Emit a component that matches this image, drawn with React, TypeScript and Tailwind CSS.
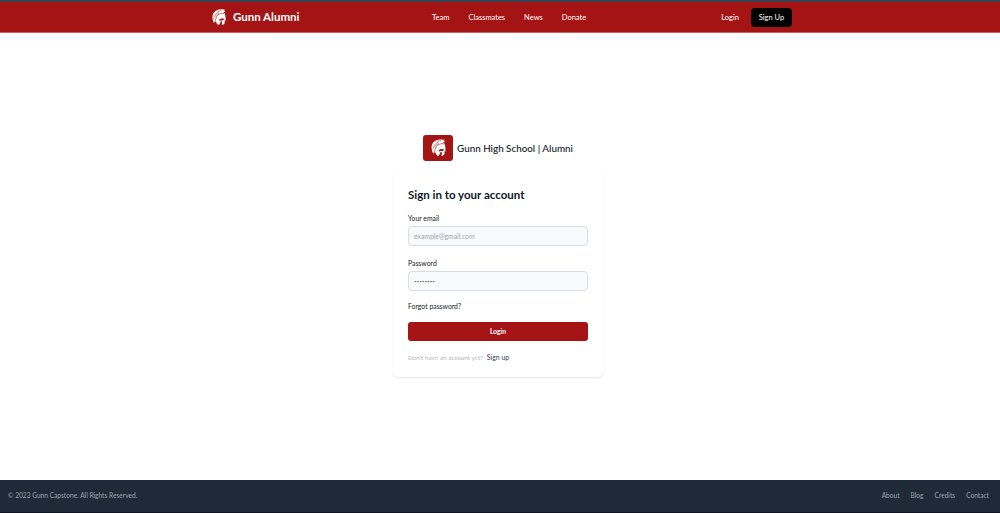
const FONT = "font-['Lato','Noto_Sans',sans-serif]";

function HelmetLogo({ className }: { className: string }) {
  return (
    <svg viewBox="0 0 28 34" className={className} fill="#fff">
      {/* silhouette */}
      <path d="M4 28C-1 18 0 8 8 3.500 14 .2 22 0 27 2c-2 .6-3 1.200-4 2.200 1.500.1 3 .7 4 1.800-2 0-3.500.3-4.800 1 1.200.3 2.200.8 2.800 1.500 1 1.500 1.700 4 2 7 .2 3 .2 6 0 8.500l-1.500-1-.5 6.500c-1.600 1.500-3.400 2.300-5.400 2.500l1-6.500-2.500-1.500-1.500 3.500-2.500 4.500C12 32 10 30 9 28l-1-3z" />
      {/* crest stripes */}
      <path d="M3.500 20C4 13 8 8 14 5.500M6.500 15c1.500-3 4-5 8-6.500M11 5c2-1.200 5-2 8-2" stroke="#a51414" strokeWidth="0.9" fill="none" />
      {/* crest edge */}
      <path d="M5 28c1-3 2.500-6 3.200-10 .8-4 4-7.500 9-8.700 2.500-.6 5-.6 7.300 0" stroke="#a51414" strokeWidth="1.200" fill="none" />
      {/* eye and cheek */}
      <path d="M14 21.500c2.500-2 6-3 9.500-2.300.3 1 .3 2.200-.2 3.300l-6.500.3-1 1.500z" fill="#a51414" />
    </svg>
  );
}

function NavLink({ label }: { label: string }) {
  return <a className="pt-[2px] text-[7.5px] leading-[12px] text-white">{label}</a>;
}

function Field({ label, placeholder, type }: { label: string; placeholder: string; type: string }) {
  return (
    <div>
      <label className="block text-[6.85px] leading-[10px] text-[#111827]">{label}</label>
      {type === "password" ? (
        <input
          type="password"
          readOnly
          value="••••••••"
          className="mt-[3px] block h-[20px] w-full rounded-[4px] border border-[#d9dde3] bg-[#f9fafb] px-[5px] text-[4.5px] text-[#6b7280] outline-none"
        />
      ) : (
        <input
          type={type}
          readOnly
          placeholder={placeholder}
          className="mt-[3px] block h-[20px] w-full rounded-[4px] border border-[#d9dde3] bg-[#f9fafb] px-[5px] text-[6.8px] text-[#6b7280] outline-none placeholder:text-[#9ca3af]"
        />
      )}
    </div>
  );
}

export default function App() {
  return (
    <div className={`flex h-[513px] flex-col overflow-hidden bg-white ${FONT}`}>
      <nav className="h-[33px] shrink-0 border-t-2 border-b border-t-[#374151] border-b-[#d0605f] bg-[#a51414]">
        <div className="ml-[212px] flex h-full w-[580px] items-center">
          <a className="flex w-[220px] items-center gap-[7px]">
            <HelmetLogo className="h-[17px] w-[14px]" />
            <span className="text-[11.5px] leading-[16px] font-bold text-white">Gunn Alumni</span>
          </a>
          <div className="flex items-center gap-[19px]">
            <NavLink label="Team" />
            <NavLink label="Classmates" />
            <NavLink label="News" />
            <NavLink label="Donate" />
          </div>
          <div className="ml-auto flex items-center gap-[12px]">
            <NavLink label="Login" />
            <a className="flex h-[19px] w-[41px] items-center justify-center rounded-[4px] bg-black pt-[1px] text-[7.5px] text-white">Sign Up</a>
          </div>
        </div>
      </nav>

      <main className="flex flex-1 flex-col items-center justify-center pr-[4px] pb-[1px]">
        <a className="mb-[11px] flex items-center gap-[4px]">
          <span className="flex h-[26px] w-[30px] items-center justify-center rounded-[3px] bg-[#a51414]">
            <HelmetLogo className="h-[18px] w-[15px]" />
          </span>
          <span className="text-[9.85px] leading-[14px] font-medium text-[#111827]">Gunn High School | Alumni</span>
        </a>
        <div className="w-[210px] rounded-[5px] bg-white px-[15px] pt-[15px] pb-[14px] shadow-[0_1px_2px_rgba(0,0,0,0.1)]">
          <h1 className="text-[11.5px] leading-[16px] font-bold text-[#111827]">Sign in to your account</h1>
          <form className="mt-[10px] flex flex-col">
            <Field label="Your email" placeholder="example@gmail.com" type="email" />
            <div className="mt-[12px]">
              <Field label="Password" placeholder="••••••••" type="password" />
            </div>
            <a className="mt-[10px] text-[6.85px] leading-[10px] text-[#111827]">Forgot password?</a>
            <button type="button" className="mt-[11px] h-[19px] w-full rounded-[3px] bg-[#a51414] text-[6.7px] font-bold text-white">
              Login
            </button>
            <p className="mt-[11px] text-[6.4px] leading-[10px] font-light text-[#6b7280]">
              Don't have an account yet?
              <a className="ml-[4px] text-[6.9px] font-normal text-[#374151]">Sign up</a>
            </p>
          </form>
        </div>
      </main>

      <footer className="flex h-[33px] shrink-0 items-center justify-between border-b border-b-[#0f1520] bg-[#1f2937] px-[8px] text-[6.6px] text-[#9ca3af]">
        <span>© 2023 Gunn Capstone. All Rights Reserved.</span>
        <div className="flex gap-[11px] pr-[3px]">
          <a>About</a>
          <a>Blog</a>
          <a>Credits</a>
          <a>Contact</a>
        </div>
      </footer>
    </div>
  );
}
